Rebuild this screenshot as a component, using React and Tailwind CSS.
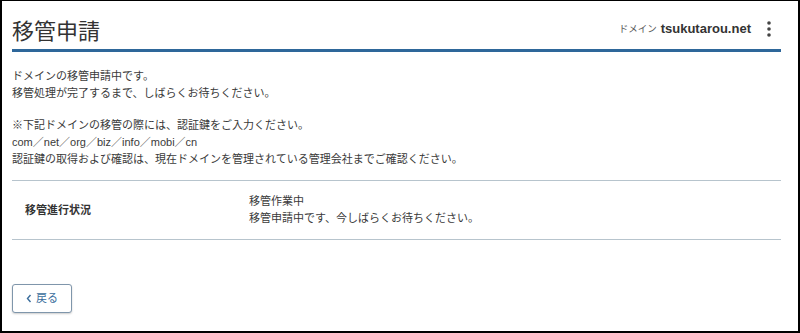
import React from "react";

const App = () => {
  return (
    <div className="w-[800px] h-[333px] bg-white border-t border-l-2 border-r-2 border-b-2 border-black overflow-hidden font-['Liberation_Sans','Noto_Sans_CJK_JP',sans-serif] text-[#3a3a3a]">
      <div className="pl-[10px] pr-[17px]">
        <div className="flex items-center justify-between pt-[14px] pb-[6px] border-b-[3px] border-[#2e679a]">
          <h1 className="text-[22px] leading-[28px] text-[#333] font-['Noto_Sans_CJK_JP',sans-serif]">
            移管申請
          </h1>
          <div className="flex items-center">
            <span className="text-[9.5px] text-[#555] mr-[4px]">ドメイン</span>
            <span className="text-[13px] font-bold text-[#333]">tsukutarou.net</span>
            <svg width="4" height="16" viewBox="0 0 4 16" className="ml-[16px] mr-[10px]">
              <circle cx="2" cy="2" r="1.8" fill="#444" />
              <circle cx="2" cy="8" r="1.8" fill="#444" />
              <circle cx="2" cy="14" r="1.8" fill="#444" />
            </svg>
          </div>
        </div>

        <div className="mt-4 text-[11px] leading-[17px]">
          <p>ドメインの移管申請中です。</p>
          <p>移管処理が完了するまで、しばらくお待ちください。</p>
        </div>
        <div className="mt-[15px] text-[11px] leading-[17px]">
          <p>※下記ドメインの移管の際には、認証鍵をご入力ください。</p>
          <p>com／net／org／biz／info／mobi／cn</p>
          <p>認証鍵の取得および確認は、現在ドメインを管理されている管理会社までご確認ください。</p>
        </div>

        <div className="mt-[12px] border-t border-b border-[#b7c4cd] h-[60px] flex items-center text-[11px] leading-[17px]">
          <div className="w-[237px] pl-[13px] font-bold text-[#333]">移管進行状況</div>
          <div>
            <p>移管作業中</p>
            <p>移管申請中です、今しばらくお待ちください。</p>
          </div>
        </div>

        <button className="mt-[44px] w-[60px] h-[29px] flex items-center justify-center gap-[4px] border border-[#7f96ab] rounded-[3px] shadow-[0_1px_2px_rgba(0,0,0,0.2)] text-[11px] text-[#3a6d9c] bg-white">
          <svg width="6" height="9" viewBox="0 0 6 9">
            <path d="M4.5 1 L1.5 4.5 L4.5 8" fill="none" stroke="#3a6d9c" strokeWidth="1.4" />
          </svg>
          <span>戻る</span>
        </button>
      </div>
    </div>
  );
};

export default App;
